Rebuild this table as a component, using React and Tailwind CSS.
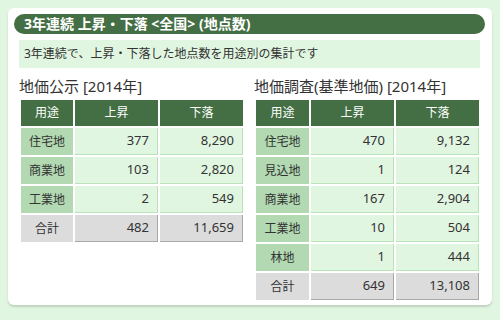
const FONT = "font-['Noto_Sans','Noto_Sans_CJK_JP',sans-serif]";

const koji = [
  ['住宅地', '377', '8,290'],
  ['商業地', '103', '2,820'],
  ['工業地', '2', '549'],
];
const kojiTotal = ['合計', '482', '11,659'];

const chosa = [
  ['住宅地', '470', '9,132'],
  ['見込地', '1', '124'],
  ['商業地', '167', '2,904'],
  ['工業地', '10', '504'],
  ['林地', '1', '444'],
];
const chosaTotal = ['合計', '649', '13,108'];

function Table({ rows, total, first }) {
  const cols = first === 53 ? 'grid-cols-[53px_83px_83px]' : 'grid-cols-[52px_83px_83px]';
  return (
    <div className={`ml-[2px] grid ${cols} gap-[2px]`}>
      {['用途', '上昇', '下落'].map((h) => (
        <div key={h} className="h-[26px] bg-[#446f44] text-white text-[12px] flex items-center justify-center">
          {h}
        </div>
      ))}
      {rows.map(([name, up, down]) => (
        <div key={name} className="contents">
          <div className="h-[27px] bg-[#b2d9b2] text-[12px] text-[#333] flex items-center justify-center">{name}</div>
          <div className="h-[27px] bg-[#e1f6e1] border-r border-b border-[#b9e2b9] text-[13px] text-[#333] flex items-center justify-end pr-[8px]">{up}</div>
          <div className="h-[27px] bg-[#e1f6e1] border-r border-b border-[#b9e2b9] text-[13px] text-[#333] flex items-center justify-end pr-[8px]">{down}</div>
        </div>
      ))}
      <div className="h-[27px] bg-[#dcdcdc] text-[12px] text-[#333] flex items-center justify-center">{total[0]}</div>
      <div className="h-[27px] bg-[#dcdcdc] border-r border-b border-[#a8a8a8] text-[13px] text-[#333] flex items-center justify-end pr-[8px]">{total[1]}</div>
      <div className="h-[27px] bg-[#dcdcdc] border-r border-b border-[#a8a8a8] text-[13px] text-[#333] flex items-center justify-end pr-[8px]">{total[2]}</div>
    </div>
  );
}

export default function App() {
  return (
    <div className={`w-[500px] h-[320px] bg-[#e1f6e1] pt-[8px] pl-[8px] ${FONT}`}>
      <div className="w-[484px] h-[297px] bg-white rounded-[6px] shadow-[0_2px_2px_rgba(0,0,0,0.15)] pt-[6px] pl-[6px] pr-[7px]">
        <div className="h-[20px] rounded-full bg-[#446f44] text-white font-bold text-[14px] leading-[20px] pl-[10px]">
          3年連続 上昇・下落 &lt;全国&gt; (地点数)
        </div>
        <div className="mx-[5px] mt-[6px] h-[28px] bg-[#e1f6e1] text-[12px] text-[#333] flex items-center pl-[5px]">
          3年連続で、上昇・下落した地点数を用途別の集計です
        </div>
        <div className="mt-[8px] flex pl-[5px] gap-[9px]">
          <div className="w-[226px]">
            <div className="h-[20px] text-[15px] leading-[20px] text-[#333] mb-[4px]">地価公示 [2014年]</div>
            <Table rows={koji} total={kojiTotal} first={52} />
          </div>
          <div className="w-[227px]">
            <div className="h-[20px] text-[15px] leading-[20px] text-[#333] mb-[4px]">地価調査(基準地価) [2014年]</div>
            <Table rows={chosa} total={chosaTotal} first={53} />
          </div>
        </div>
      </div>
    </div>
  );
}
